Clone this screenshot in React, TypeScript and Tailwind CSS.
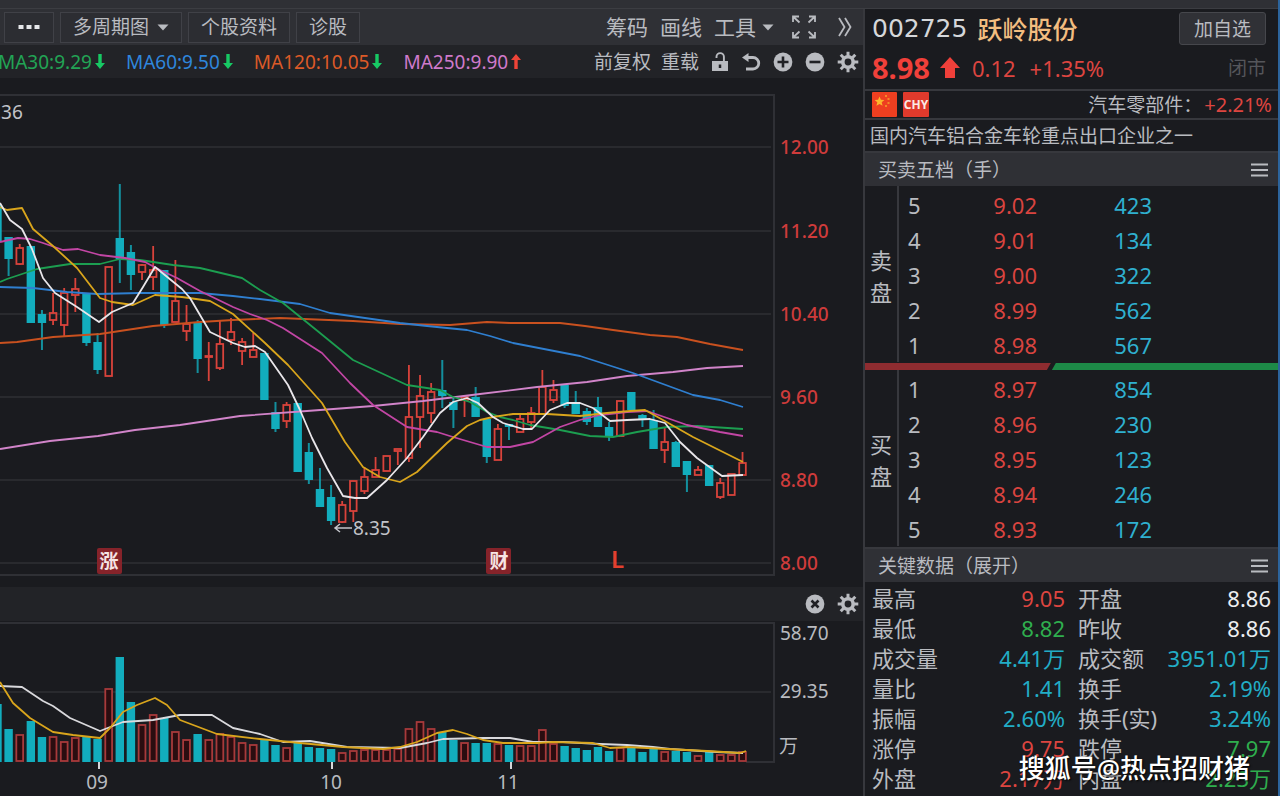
import type { ReactNode } from "react";

type Candle = [kind: "u" | "d", high: number, top: number, bottom: number, low: number, volume: number];

// high / body top / body bottom / low / volume bar top, in chart units
const candles: Candle[] = [
  ["d", 205, 205, 241, 241, 704],
  ["d", 237, 237, 259, 276, 729],
  ["u", 244, 248, 264, 265, 734],
  ["d", 246, 246, 323, 323, 721],
  ["d", 310, 314, 323, 350, 737],
  ["u", 293, 313, 320, 325, 736],
  ["u", 288, 293, 325, 336, 741],
  ["u", 278, 289, 295, 312, 737],
  ["d", 294, 294, 343, 346, 736],
  ["d", 333, 342, 370, 374, 739],
  ["u", 267, 267, 376, 376, 688],
  ["d", 184, 238, 259, 283, 657],
  ["d", 245, 252, 275, 290, 702],
  ["u", 264, 265, 272, 280, 724],
  ["u", 246, 270, 277, 290, 714],
  ["d", 270, 270, 325, 328, 718],
  ["u", 260, 301, 322, 322, 731],
  ["u", 305, 324, 331, 341, 739],
  ["d", 320, 323, 359, 373, 734],
  ["u", 342, 356, 357, 381, 739],
  ["u", 320, 344, 368, 370, 733],
  ["u", 318, 332, 340, 345, 736],
  ["u", 338, 342, 351, 365, 742],
  ["u", 333, 350, 357, 357, 744],
  ["d", 353, 353, 400, 400, 740],
  ["d", 402, 412, 429, 432, 745],
  ["u", 402, 405, 421, 428, 747],
  ["d", 403, 403, 472, 472, 743],
  ["d", 443, 452, 480, 484, 747],
  ["d", 468, 489, 507, 507, 748],
  ["d", 485, 497, 521, 525, 749],
  ["u", 501, 505, 522, 523, 752],
  ["u", 481, 481, 511, 522, 750],
  ["u", 467, 477, 491, 494, 749],
  ["u", 457, 470, 477, 477, 749],
  ["u", 456, 456, 471, 471, 749],
  ["u", 449, 449, 451, 465, 748],
  ["u", 365, 417, 458, 462, 728],
  ["u", 375, 396, 417, 448, 721],
  ["u", 383, 392, 413, 423, 728],
  ["d", 360, 390, 396, 408, 732],
  ["d", 398, 402, 410, 428, 740],
  ["u", 397, 397, 400, 417, 742],
  ["d", 387, 397, 417, 417, 743],
  ["d", 419, 419, 457, 463, 743],
  ["u", 424, 429, 460, 460, 743],
  ["d", 424, 424, 427, 440, 745],
  ["u", 415, 419, 432, 432, 745],
  ["u", 407, 413, 422, 429, 745],
  ["u", 370, 387, 414, 414, 729],
  ["u", 380, 390, 400, 403, 743],
  ["d", 385, 385, 406, 408, 746],
  ["d", 391, 402, 414, 414, 748],
  ["d", 408, 411, 422, 425, 750],
  ["d", 397, 407, 427, 427, 747],
  ["d", 422, 427, 437, 441, 751],
  ["u", 401, 401, 436, 436, 747],
  ["d", 392, 392, 410, 410, 747],
  ["d", 414, 415, 419, 427, 752],
  ["d", 410, 420, 449, 449, 747],
  ["u", 427, 442, 450, 463, 751],
  ["d", 441, 442, 467, 467, 751],
  ["d", 461, 461, 475, 492, 752],
  ["u", 466, 470, 475, 475, 755],
  ["d", 465, 465, 486, 486, 752],
  ["u", 478, 483, 497, 499, 754],
  ["u", 474, 474, 495, 495, 754],
  ["u", 452, 463, 475, 475, 751],
];

const candleX = (i: number) => 8.6 + 11.12 * (i - 1);

const averages = [
  {
    color: "#d184c9",
    points:
      "0,449 50,441 98,436 135,430 180,425 240,416 307,411 373,406 423,401 480,394 537,387 587,382 627,376 673,372 707,368 743,366",
  },
  {
    color: "#c9511f",
    points:
      "0,343 17,342 53,337 100,334 153,326 200,322 233,320 280,318 353,321 400,324 450,325 487,322 510,323 560,323 585,326 613,330 650,335 677,337 710,344 743,350",
  },
  {
    color: "#2f7fd0",
    points:
      "0,287 33,288 67,292 97,294 140,293 200,293 233,296 260,299 300,304 330,313 400,323 427,326 467,330 490,336 513,343 580,356 633,373 693,395 720,400 743,407",
  },
  {
    color: "#1c9e50",
    points:
      "0,282 7,279 37,269 70,264 100,264 120,259 140,260 173,265 200,268 242,278 260,290 283,303 320,333 353,360 407,385 440,390 453,397 470,402 487,412 500,417 513,420 530,425 560,430 590,436 613,437 637,432 667,427 697,426 743,429",
  },
  {
    color: "#c246a4",
    points:
      "0,242 18,238 30,239 43,243 63,250 78,249 100,255 125,258 145,262 160,270 177,278 200,291 233,307 250,314 267,320 283,328 322,353 350,383 373,405 407,427 437,432 453,437 487,447 510,447 533,442 560,427 580,420 600,415 627,412 647,411 670,419 687,425 720,432 743,436",
  },
  {
    color: "#d9a51c",
    points:
      "0,207 7,210 22,208 33,229 53,246 77,268 100,298 112,302 133,305 155,295 182,297 210,301 233,314 265,343 288,365 322,403 345,442 363,467 380,477 400,482 417,472 447,443 467,426 480,420 493,417 513,414 547,414 580,416 607,413 630,411 645,410 663,420 693,437 743,462",
  },
  {
    color: "#e9e6ea",
    points:
      "0,203 10,220 22,229 32,249 43,278 55,293 77,307 99,322 112,312 133,303 143,287 155,267 182,289 190,298 210,332 233,343 245,347 255,346 265,352 288,385 300,410 312,438 327,468 343,496 355,498 367,498 387,480 407,458 423,437 440,413 453,402 467,398 478,403 493,417 503,423 523,429 532,429 550,410 567,403 580,403 593,408 610,421 627,420 650,419 665,423 680,442 697,458 722,476 743,475",
  },
];

const volumeAverages = [
  {
    color: "#d9d9dc",
    points:
      "0,686 22,687 43,701 53,706 70,718 100,731 123,722 153,720 180,715 212,715 233,728 260,734 283,742 310,741 347,747 400,748 427,743 443,739 483,738 510,738 533,742 563,742 600,744 627,745 653,747 670,749 717,752 743,753",
  },
  {
    color: "#d9a51c",
    points:
      "0,682 3,687 13,703 30,718 53,732 73,735 100,738 110,728 123,712 137,705 155,698 167,705 180,720 217,734 260,739 300,743 343,747 383,749 400,747 417,742 437,733 453,730 467,734 483,740 503,743 537,743 553,742 593,743 610,748 627,747 667,749 707,751 740,753 746,751",
  },
];

const priceTicks: [string, number][] = [
  ["12.00", 147],
  ["11.20", 231],
  ["10.40", 314],
  ["9.60", 397],
  ["8.80", 480],
  ["8.00", 563],
];

const asks = [
  ["5", "9.02", "423"],
  ["4", "9.01", "134"],
  ["3", "9.00", "322"],
  ["2", "8.99", "562"],
  ["1", "8.98", "567"],
];

const bids = [
  ["1", "8.97", "854"],
  ["2", "8.96", "230"],
  ["3", "8.95", "123"],
  ["4", "8.94", "246"],
  ["5", "8.93", "172"],
];

const RED = "text-[#dd4540]";
const GREEN = "text-[#2fae4e]";
const CYAN = "text-[#22adc6]";
const WHITE = "text-[#eceef0]";

const keyData = [
  ["最高", "9.05", RED, "开盘", "8.86", WHITE],
  ["最低", "8.82", GREEN, "昨收", "8.86", WHITE],
  ["成交量", "4.41万", CYAN, "成交额", "3951.01万", CYAN],
  ["量比", "1.41", CYAN, "换手", "2.19%", CYAN],
  ["振幅", "2.60%", CYAN, "换手(实)", "3.24%", CYAN],
  ["涨停", "9.75", RED, "跌停", "7.97", GREEN],
  ["外盘", "2.17万", RED, "内盘", "2.23万", GREEN],
];

function Caret() {
  return (
    <svg width="12" height="7" viewBox="0 0 12 7" fill="currentColor" aria-hidden="true">
      <path d="M0.5 0.5h11L6 6.5z" />
    </svg>
  );
}

function SmallArrow({ up }: { up?: boolean }) {
  return (
    <svg width="10" height="17" viewBox="0 0 10 17" className={up ? "text-[#ee4438]" : "text-[#17c964]"} aria-hidden="true">
      <path d={up ? "M5 1l5 6H6.7v9H3.3V7H0z" : "M5 16l5-6H6.7V1H3.3v9H0z"} fill="currentColor" />
    </svg>
  );
}

function Gear() {
  return (
    <svg width="22" height="22" viewBox="0 0 22 22" fill="none" stroke="currentColor" aria-hidden="true">
      <circle cx="11" cy="11" r="5.2" strokeWidth="3.6" />
      <path
        strokeWidth="3"
        d="M11 0.7V5M11 17v4.3M0.7 11H5M17 11h4.3M3.7 3.7l3 3M15.3 15.3l3 3M18.3 3.7l-3 3M6.7 15.3l-3 3"
      />
    </svg>
  );
}

function RoundIcon({ d }: { d: string }) {
  return (
    <svg width="20" height="20" viewBox="0 0 20 20" aria-hidden="true">
      <circle cx="10" cy="10" r="9.4" fill="currentColor" />
      <path d={d} stroke="#202125" strokeWidth="2.6" fill="none" />
    </svg>
  );
}

function MenuIcon() {
  return (
    <svg width="17" height="14" viewBox="0 0 17 14" stroke="currentColor" strokeWidth="2" aria-hidden="true">
      <path d="M0 1.5h17M0 7h17M0 12.5h17" />
    </svg>
  );
}

function ToolButton({ children, label }: { children: ReactNode; label?: string }) {
  return (
    <button
      aria-label={label}
      className="flex h-[31px] items-center gap-2 border border-[#404147] bg-[#2c2d32] px-3 whitespace-nowrap"
    >
      {children}
    </button>
  );
}

function Average({ label, color, up }: { label: string; color: string; up?: boolean }) {
  return (
    <span className={`flex items-center gap-[3px] ${color}`}>
      {label}
      <SmallArrow up={up} />
    </span>
  );
}

function Toolbar() {
  return (
    <div className="flex h-9 items-center justify-between bg-[#2f3035] pr-[11px] pl-1">
      <div className="flex items-center gap-[6px]">
        <ToolButton label="更多">
          <svg width="24" height="6" viewBox="0 0 24 6" fill="#e6e7ea" aria-hidden="true">
            <path d="M1.5 1h5v4h-5zM9.5 1h5v4h-5zM17.5 1h5v4h-5z" />
          </svg>
        </ToolButton>
        <ToolButton>
          多周期图
          <Caret />
        </ToolButton>
        <ToolButton>个股资料</ToolButton>
        <ToolButton>诊股</ToolButton>
      </div>
      <div className="flex items-center gap-3 text-[21px] whitespace-nowrap">
        <button>筹码</button>
        <button>画线</button>
        <button className="flex items-center gap-[6px]">
          工具
          <Caret />
        </button>
        <button aria-label="全屏" className="ml-[6px]">
          <svg width="24" height="24" viewBox="0 0 24 24" fill="none" stroke="currentColor" strokeWidth="1.8" aria-hidden="true">
            <path d="M1 7V1.5h6M17 1.5h6V7M23 17v5.500h-6M7 22.500H1V17M1.500 2l6 5.500M22.500 2L16.500 7.500M22.500 22L16.500 16.500M1.500 22L7.500 16.500" />
          </svg>
        </button>
        <button aria-label="展开" className="ml-[10px]">
          <svg width="14" height="20" viewBox="0 0 14 20" fill="none" stroke="currentColor" strokeWidth="1.8" aria-hidden="true">
            <path d="M1 1l5.500 9L1 19M7 1l5.500 9L7 19" />
          </svg>
        </button>
      </div>
    </div>
  );
}

function AverageBar() {
  return (
    <div className="flex h-[33px] items-center justify-between bg-[#222327] pr-1">
      <div className="-ml-[2px] flex items-center gap-[21px] whitespace-nowrap">
        <Average label="MA30:9.29" color="text-[#22a455]" />
        <Average label="MA60:9.50" color="text-[#2f86dc]" />
        <Average label="MA120:10.05" color="text-[#dc5a28]" />
        <Average label="MA250:9.90" color="text-[#cf7acb]" up />
      </div>
      <div className="flex items-center gap-3 whitespace-nowrap">
        <button>前复权</button>
        <button className="-ml-[2px]">重载</button>
        <button aria-label="锁定">
          <svg width="18" height="20" viewBox="0 0 18 20" aria-hidden="true">
            <path d="M5.500 6V4.800a3.700 3.700 0 0 1 7.400 0V10" fill="none" stroke="currentColor" strokeWidth="1.900" />
            <path d="M1 9h16v10H1z" fill="currentColor" />
            <path d="M9 12.500v3.500" stroke="#202125" strokeWidth="2.500" />
          </svg>
        </button>
        <button aria-label="撤销">
          <svg width="20" height="20" viewBox="0 0 20 20" aria-hidden="true">
            <path d="M5 5.500h7a5.500 5.500 0 0 1 0 11.500H5" fill="none" stroke="currentColor" strokeWidth="2.800" />
            <path d="M1 5.500L7.500 1v9z" fill="currentColor" />
          </svg>
        </button>
        <button aria-label="放大">
          <RoundIcon d="M10 4.500v11M4.500 10h11" />
        </button>
        <button aria-label="缩小">
          <RoundIcon d="M4.500 10h11" />
        </button>
        <button aria-label="指标设置">
          <Gear />
        </button>
      </div>
    </div>
  );
}

function PriceChart() {
  return (
    <svg viewBox="0 78 863 509" className="block h-auto w-full" fontSize="19" role="img" aria-label="日K线">
      <g stroke="#2f3035" strokeWidth="2" fill="none">
        <path d="M0 95H774V575H0" />
        {priceTicks.map(([, y]) => (
          <path key={y} d={`M0 ${y}H771`} strokeWidth="1.5" />
        ))}
      </g>
      <g fill="#cf3b3b" fontWeight="500">
        {priceTicks.map(([label, y]) => (
          <text key={label} x="780" y={y + 7}>
            {label}
          </text>
        ))}
      </g>
      <text x="-4" y="119" fill="#c2c4c9">
        .36
      </text>
      {candles.map(([kind, high, top, bottom, low], i) => {
        const x = candleX(i);
        return kind === "d" ? (
          <g key={i} fill="#12adbd">
            <rect x={x - 1} y={high} width="2" height={low - high} opacity="0.8" />
            <rect x={x - 4.2} y={top} width="8.4" height={bottom - top} />
          </g>
        ) : (
          <g key={i} fill="none" stroke="#d9433b" strokeWidth="1.8">
            <path d={`M${x} ${high}V${top}M${x} ${bottom}V${low}`} />
            <rect x={x - 3.3} y={top} width="6.6" height={bottom - top} />
          </g>
        );
      })}
      <g fill="none" strokeWidth="1.8" strokeLinejoin="round">
        {averages.map((line) => (
          <polyline key={line.color} points={line.points} stroke={line.color} />
        ))}
      </g>
      <path d="M352 528H335M340 524l-5 4 5 4" fill="none" stroke="#c2c4c9" strokeWidth="1.5" />
      <text x="353" y="535" fill="#c2c4c9">
        8.35
      </text>
      <g fontWeight="700" textAnchor="middle" fill="#f6e4e4">
        <rect x="97" y="548" width="25" height="26" rx="2" fill="#86232a" />
        <text x="109" y="568">
          涨
        </text>
        <rect x="486" y="548" width="25" height="26" rx="2" fill="#86232a" />
        <text x="499" y="568">
          财
        </text>
      </g>
      <text x="611" y="568" fill="#e2402f" fontSize="24" fontWeight="600">
        L
      </text>
    </svg>
  );
}

function VolumeChart() {
  return (
    <svg viewBox="0 621 863 175" className="block h-auto w-full" fontSize="19" role="img" aria-label="成交量">
      <g stroke="#2f3035" strokeWidth="2" fill="none">
        <path d="M0 623H774V762H746" />
        <path d="M0 692H771" strokeWidth="1.5" />
      </g>
      {candles.map(([kind, , , , , top], i) =>
        kind === "d" ? (
          <rect key={i} x={candleX(i) - 4.2} y={top} width="8.4" height={762 - top} fill="#12adbd" />
        ) : (
          <rect
            key={i}
            x={candleX(i) - 3.4}
            y={top + 1}
            width="6.8"
            height={760 - top}
            fill="#2a0d10"
            stroke="#a83a3b"
            strokeWidth="1.8"
          />
        ),
      )}
      <g fill="none" strokeWidth="1.8" strokeLinejoin="round">
        {volumeAverages.map((line) => (
          <polyline key={line.color} points={line.points} stroke={line.color} />
        ))}
      </g>
      <path d="M99 762v7M332 762v7M511 762v7" stroke="#d5d6d9" strokeWidth="2" />
      <g fill="#b9bbc0">
        <text x="780" y="640">
          58.70
        </text>
        <text x="780" y="698">
          29.35
        </text>
        <text x="779" y="753">
          万
        </text>
        <g textAnchor="middle">
          <text x="97" y="789">
            09
          </text>
          <text x="331" y="789">
            10
          </text>
          <text x="508" y="789">
            11
          </text>
        </g>
      </g>
    </svg>
  );
}

function PanelHeader({ title }: { title: string }) {
  return (
    <div className="flex h-[35px] items-center justify-between border-t-2 border-[#37383d] bg-[#2f3035] pr-[10px] pl-[13px]">
      <h2>{title}</h2>
      <button aria-label={`${title}菜单`}>
        <MenuIcon />
      </button>
    </div>
  );
}

function BookSide({ label, rows }: { label: string; rows: string[][] }) {
  return (
    <div className="flex pb-[1px] text-[22px] leading-8">
      <div className="flex w-[34px] flex-col items-center justify-center border-r-2 border-[#37383d] pt-[3px]">
        {label.split("").map((char) => (
          <span key={char}>{char}</span>
        ))}
      </div>
      <table className="mt-[1px] flex-1 table-fixed border-collapse" aria-label={label}>
        <colgroup>
          <col className="w-[40px]" />
          <col className="w-[98px]" />
          <col className="w-[115px]" />
          <col />
        </colgroup>
        <tbody>
          {rows.map(([level, price, volume]) => (
            <tr key={level} className="h-[35px]">
              <th scope="row" className="p-0 pl-[9px] text-left font-normal">
                {level}
              </th>
              <td className="p-0 text-right text-[#d9443f]">{price}</td>
              <td className="p-0 text-right text-[#2fb0cf]">{volume}</td>
              <td />
            </tr>
          ))}
        </tbody>
      </table>
    </div>
  );
}

function Quote() {
  return (
    <header className="h-[80px] pr-3 pl-[7px]">
      <div className="flex h-[39px] items-center whitespace-nowrap">
        <span className="font-['DejaVu_Sans',sans-serif] text-[25px] text-[#d5d7da]">002725</span>
        <h1 className="ml-[10px] text-[25px] font-medium text-[#f2bd80]">跃岭股份</h1>
        <button className="ml-auto h-[33px] rounded-[3px] border border-[#46474c] bg-[#303136] px-[14px]">加自选</button>
      </div>
      <div className="flex h-10 items-center text-[22px] whitespace-nowrap text-[#dd4540]">
        <strong className="text-[29px] font-bold text-[#f0403a]">8.98</strong>
        <svg width="20" height="22" viewBox="0 0 20 22" className="ml-[10px]" fill="#f0403a" aria-hidden="true">
          <path d="M10 0l10 11h-5v10H5V11H0z" />
        </svg>
        <span className="ml-3">0.12</span>
        <span className="ml-[14px]">+1.35%</span>
        <span className="ml-auto text-[19px] text-[#55565b]">闭市</span>
      </div>
    </header>
  );
}

function Sidebar() {
  return (
    <aside className="relative w-[415px] shrink-0 border-l-2 border-[#37383d]">
      <Quote />
      <div className="flex h-[31px] items-center gap-[6px] border-y-2 border-[#37383d] pr-[6px] pl-[7px] whitespace-nowrap">
        <svg width="25" height="25" viewBox="0 0 25 25" role="img" aria-label="中国">
          <rect width="25" height="25" rx="1" fill="#ee3f20" />
          <path
            fill="#fbb62b"
            d="M7.500 4.500l1.400 3.300 3.500.2-2.700 2.300.9 3.500-3.100-1.900-3.100 1.900.9-3.500L2.600 8l3.500-.2z"
          />
          <path fill="#f58a26" d="M13 3h2v2h-2zM15.500 6h2v2h-2zM15.500 10h2v2h-2zM13 13h2v2h-2z" />
        </svg>
        <span className="flex h-[25px] w-[26px] items-center justify-center rounded-[1px] bg-[#e03a2c] font-['Liberation_Sans_Narrow','Noto_Sans',sans-serif] text-[12px] font-bold text-[#fbe9e4]">
          CHY
        </span>
        <a href="#industry" className="ml-auto">
          汽车零部件：
        </a>
        <span className="-ml-1 text-[20px] text-[#dd4540]">+2.21%</span>
      </div>
      <p className="flex h-[31px] items-center pl-[5px] whitespace-nowrap">国内汽车铝合金车轮重点出口企业之一</p>
      <PanelHeader title="买卖五档（手）" />
      <BookSide label="卖盘" rows={asks} />
      <div className="flex h-[7px]">
        <div className="w-[45%] bg-[#8f2c30] [clip-path:polygon(0_0,100%_0,calc(100%-4px)_100%,0_100%)]" />
        <div className="flex-1 bg-[#1d8a47] [clip-path:polygon(5px_0,100%_0,100%_100%,1px_100%)]" />
      </div>
      <BookSide label="买盘" rows={bids} />
      <PanelHeader title="关键数据（展开）" />
      <table
        className="mt-[1px] w-full table-fixed border-collapse text-[22px] leading-[30px] whitespace-nowrap"
        aria-label="关键数据"
      >
        <colgroup>
          <col className="w-[100px]" />
          <col className="w-[100px]" />
          <col className="w-[100px]" />
          <col />
        </colgroup>
        <tbody>
          {keyData.map(([name, value, tone, name2, value2, tone2]) => (
            <tr key={name} className="h-[30px]">
              <th scope="row" className="p-0 pl-[7px] text-left font-normal">
                {name}
              </th>
              <td className={`p-0 text-right ${tone}`}>{value}</td>
              <th scope="row" className="p-0 pl-[13px] text-left font-normal">
                {name2}
              </th>
              <td className={`p-0 pr-[7px] text-right ${tone2}`}>{value2}</td>
            </tr>
          ))}
        </tbody>
      </table>
      <div className="absolute right-[28px] bottom-[10px] text-[26px] leading-9 font-medium whitespace-nowrap text-white [text-shadow:1px_1px_2px_#000]">
        搜狐号@热点招财猪
      </div>
    </aside>
  );
}

export default function App() {
  return (
    <div className="min-h-screen border-r-2 border-[#2c649c] bg-[#1a1b1f] font-['Noto_Sans','Noto_Sans_CJK_SC',sans-serif] text-[19px] leading-7 text-[#b9bbc0]">
      <div className="h-[9px] border-b border-[#3c3d42] bg-[#2f3035]" />
      <div className="flex">
        <main className="min-w-0 flex-1 overflow-hidden">
          <Toolbar />
          <AverageBar />
          <PriceChart />
          <div className="flex h-[34px] items-center justify-end gap-3 bg-[#222327] pr-1">
            <button aria-label="关闭">
              <RoundIcon d="M6.500 6.500l7 7M13.500 6.500l-7 7" />
            </button>
            <button aria-label="成交量设置">
              <Gear />
            </button>
          </div>
          <VolumeChart />
        </main>
        <Sidebar />
      </div>
    </div>
  );
}
